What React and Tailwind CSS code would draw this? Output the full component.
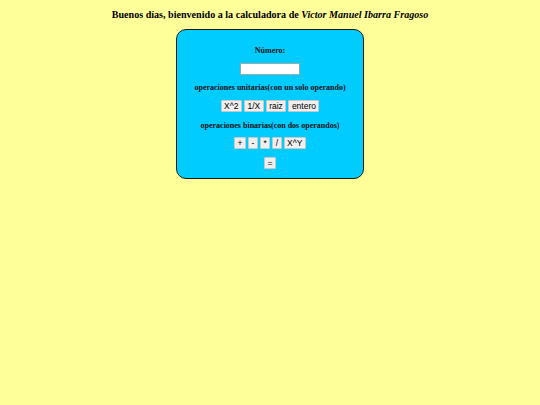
export default function App() {
  const btn = "bg-[#efefef] border border-[#c8c8c8] rounded-[1px] px-[2.5px] h-[12px] leading-[10px] text-[8.5px] text-black";
  return (
    <div className="w-[540px] h-[405px] bg-[#ffff99] flex flex-col items-center" style={{ fontFamily: '"Liberation Serif", serif' }}>
      <div className="mt-[8px] h-[13px] leading-[13px] text-[10.1px] font-bold text-black">
        Buenos días, bienvenido a la calculadora de <i>Victor Manuel Ibarra Fragoso</i>
      </div>
      <div className="mt-[8px] w-[188px] h-[150px] bg-[#00ccff] border-[1.5px] border-[#1a1a1a] rounded-[10px] flex flex-col items-center text-[#111] font-bold">
        <div className="mt-[16px] text-[8px] leading-[10px]">Número:</div>
        <div className="mt-[7px] w-[60px] h-[12px] bg-white border border-[#9aa]" />
        <div className="mt-[8px] text-[8px] leading-[10px]">operaciones unitarias(con un solo operando)</div>
        <div className="mt-[7px] flex gap-[2px] font-normal" style={{ fontFamily: '"Liberation Sans", sans-serif' }}>
          <button className={btn}>X^2</button>
          <button className={btn}>1/X</button>
          <button className={btn}>raiz</button>
          <button className={btn}>entero</button>
        </div>
        <div className="mt-[9px] text-[8px] leading-[10px]">operaciones binarias(con dos operandos)</div>
        <div className="mt-[6px] flex gap-[2px] font-normal" style={{ fontFamily: '"Liberation Sans", sans-serif' }}>
          <button className={btn}>+</button>
          <button className={btn}>-</button>
          <button className={btn}>*</button>
          <button className={btn}>/</button>
          <button className={btn}>X^Y</button>
        </div>
        <div className="mt-[8px] flex font-normal" style={{ fontFamily: '"Liberation Sans", sans-serif' }}>
          <button className={btn}>=</button>
        </div>
      </div>
    </div>
  );
}
